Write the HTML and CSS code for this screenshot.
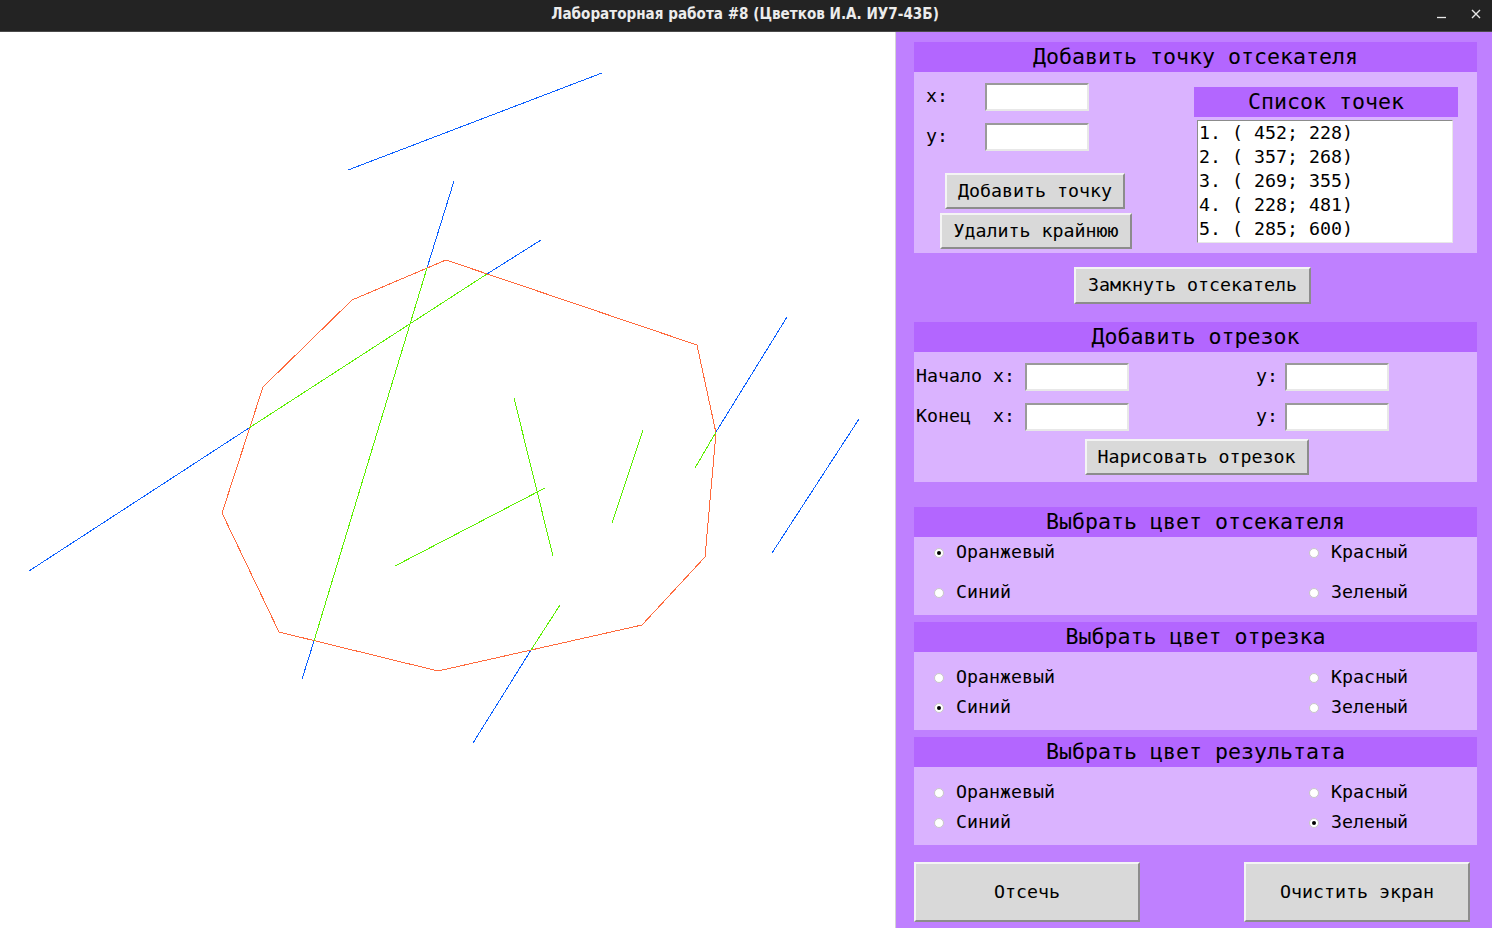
FILE: index.html
```html
<!DOCTYPE html>
<html lang="ru">
<head>
<meta charset="utf-8">
<title>Лабораторная работа #8</title>
<link rel="stylesheet" href="styles.css">
</head>
<body>
<div class="window">
  <header class="titlebar">
    <div class="title">Лабораторная работа #8 (Цветков И.А. ИУ7-43Б)</div>
    <div class="controls">
      <svg class="ctl" width="12" height="12" viewBox="0 0 12 12"><path d="M1 9.5H10" stroke="#e8e8e8" stroke-width="1.3"/></svg>
      <svg class="ctl" width="12" height="12" viewBox="0 0 12 12"><path d="M2 2L10 10M10 2L2 10" stroke="#e8e8e8" stroke-width="1.4"/></svg>
    </div>
  </header>
  <div class="content">
    <div class="canvas">
      <svg class="drawing" width="895" height="896" viewBox="0 0 895 896" shape-rendering="crispEdges" fill="none" stroke-width="1">
        <g stroke="#0a5fff">
          <line x1="348" y1="138" x2="602" y2="41"/>
          <line x1="454" y1="149" x2="427" y2="236"/>
          <line x1="314" y1="609" x2="302" y2="647"/>
          <line x1="541" y1="208" x2="487" y2="242"/>
          <line x1="249" y1="396" x2="29" y2="539"/>
          <line x1="787" y1="285" x2="716" y2="400"/>
          <line x1="859" y1="387" x2="772" y2="521"/>
          <line x1="531" y1="618" x2="473" y2="711"/>
        </g>
        <polygon stroke="#ff6a3d" points="446,228 697,313 716,401 705,525 642,593 438,639 279,600 222,481 263,355 352,268"/>
        <g stroke="#5cf000">
          <line x1="427" y1="236" x2="314" y2="609"/>
          <line x1="487" y1="242" x2="249" y2="396"/>
          <line x1="716" y1="400" x2="695" y2="436"/>
          <line x1="560" y1="573" x2="531" y2="618"/>
          <line x1="514" y1="366" x2="553" y2="524"/>
          <line x1="643" y1="398" x2="612" y2="491"/>
          <line x1="545" y1="456" x2="395" y2="534"/>
        </g>
      </svg>
    </div>
    <aside class="panel">
      <section class="group">
        <h2 class="group-title">Добавить точку отсекателя</h2>
        <div class="group-body clip-body">
          <div class="clip-left">
            <div class="field-row"><span class="lbl lbl-xy">x:</span><input class="entry" type="text"></div>
            <div class="field-row"><span class="lbl lbl-xy">y:</span><input class="entry" type="text"></div>
            <button class="btn btn-add">Добавить точку</button>
            <button class="btn btn-del">Удалить крайнюю</button>
          </div>
          <div class="clip-right">
            <div class="list-title">Список точек</div>
            <div class="listbox">
              <div class="list-item">1. ( 452; 228)</div>
              <div class="list-item">2. ( 357; 268)</div>
              <div class="list-item">3. ( 269; 355)</div>
              <div class="list-item">4. ( 228; 481)</div>
              <div class="list-item">5. ( 285; 600)</div>
            </div>
          </div>
        </div>
      </section>

      <div class="center-row"><button class="btn btn-close">Замкнуть отсекатель</button></div>

      <section class="group group-seg">
        <h2 class="group-title">Добавить отрезок</h2>
        <div class="group-body seg-body">
          <div class="seg-row">
            <span class="lbl lbl-name">Начало</span><span class="lbl lbl-x">x:</span><input class="entry" type="text">
            <span class="lbl lbl-y">y:</span><input class="entry" type="text">
          </div>
          <div class="seg-row">
            <span class="lbl lbl-name">Конец</span><span class="lbl lbl-x">x:</span><input class="entry" type="text">
            <span class="lbl lbl-y">y:</span><input class="entry" type="text">
          </div>
          <div class="center-row"><button class="btn btn-draw">Нарисовать отрезок</button></div>
        </div>
      </section>

      <section class="group group-c1">
        <h2 class="group-title">Выбрать цвет отсекателя</h2>
        <div class="group-body radios radios-wide">
          <label class="radio"><span class="dot on"></span>Оранжевый</label>
          <label class="radio"><span class="dot"></span>Красный</label>
          <label class="radio"><span class="dot"></span>Синий</label>
          <label class="radio"><span class="dot"></span>Зеленый</label>
        </div>
      </section>

      <section class="group group-c2">
        <h2 class="group-title">Выбрать цвет отрезка</h2>
        <div class="group-body radios">
          <label class="radio"><span class="dot"></span>Оранжевый</label>
          <label class="radio"><span class="dot"></span>Красный</label>
          <label class="radio"><span class="dot on"></span>Синий</label>
          <label class="radio"><span class="dot"></span>Зеленый</label>
        </div>
      </section>

      <section class="group group-c3">
        <h2 class="group-title">Выбрать цвет результата</h2>
        <div class="group-body radios">
          <label class="radio"><span class="dot"></span>Оранжевый</label>
          <label class="radio"><span class="dot"></span>Красный</label>
          <label class="radio"><span class="dot"></span>Синий</label>
          <label class="radio"><span class="dot on"></span>Зеленый</label>
        </div>
      </section>

      <div class="bottom-row">
        <button class="btn btn-big">Отсечь</button>
        <button class="btn btn-big">Очистить экран</button>
      </div>
    </aside>
  </div>
</div>
</body>
</html>
```

FILE: styles.css
```css
* { box-sizing: border-box; }

html, body {
  margin: 0;
  padding: 0;
  width: 1492px;
  height: 928px;
  overflow: hidden;
  background: #ffffff;
}

.window {
  width: 1492px;
  height: 928px;
  display: flex;
  flex-direction: column;
  font-family: "DejaVu Sans Mono", monospace;
  font-size: 18.3px;
  color: #000;
}

.titlebar {
  height: 32px;
  flex: none;
  background: #232323;
  border-bottom: 1px solid #4a4a4a;
  display: flex;
  align-items: center;
  justify-content: center;
  position: relative;
}

.title {
  font-family: "DejaVu Sans Condensed", "DejaVu Sans", sans-serif;
  font-stretch: condensed;
  font-weight: bold;
  font-size: 15.1px;
  color: #ececec;
  margin-top: -3px;
  margin-left: -2px;
}

.controls {
  position: absolute;
  right: 10px;
  top: 8px;
  display: flex;
  gap: 22px;
}

.content {
  flex: 1;
  display: flex;
}

.canvas {
  width: 896px;
  flex: none;
  background: #ffffff;
  border-right: 1px solid #d4d4d4;
}

.drawing { display: block; }

.panel {
  flex: 1;
  background: #bf80ff;
  padding: 10px 15px 0 18px;
  display: flex;
  flex-direction: column;
}

.group { margin: 0; }

.group-title {
  margin: 0;
  height: 30px;
  background: #b366ff;
  font-weight: normal;
  font-size: 21.6px;
  line-height: 29px;
  text-align: center;
}

.group-body { background: #dab3ff; }

/* ---- section 1 ---- */
.clip-body {
  height: 181px;
  display: flex;
}

.clip-left {
  width: 280px;
  padding: 11px 0 0 12px;
  display: flex;
  flex-direction: column;
  align-items: flex-start;
}

.field-row {
  height: 28px;
  display: flex;
  align-items: center;
  margin-bottom: 12px;
  line-height: 24px;
}

.lbl { white-space: pre; margin-top: -3px; }
.lbl-xy { width: 59px; }

.entry {
  width: 104px;
  height: 28px;
  margin: 0;
  padding: 0;
  background: #ffffff;
  border: 2px solid;
  border-color: #9a9a9a #e8e8e8 #e8e8e8 #9a9a9a;
  outline: none;
}

.btn {
  font-family: "DejaVu Sans Mono", monospace;
  font-size: 18.3px;
  line-height: 20px;
  color: #000;
  background: #d9d9d9;
  border: 2px solid;
  border-color: #f4f4f4 #8c8c8c #8c8c8c #f4f4f4;
  padding: 0 0 1px 0;
  margin: 0;
  height: 36px;
  white-space: pre;
}

.btn-add { width: 180px; margin: 10px 0 0 19px; }
.btn-del { width: 192px; margin: 4px 0 0 14px; }

.clip-right { padding-top: 15px; }

.list-title {
  width: 264px;
  height: 30px;
  background: #b366ff;
  font-size: 21.6px;
  line-height: 29px;
  text-align: center;
}

.listbox {
  width: 256px;
  height: 123px;
  margin: 3px 0 0 3px;
  background: #ffffff;
  border: 1px solid;
  border-color: #8c8c8c #e8e8e8 #e8e8e8 #8c8c8c;
  padding: 0 1px;
}

.list-item {
  height: 24px;
  line-height: 24px;
  white-space: pre;
}

.center-row {
  display: flex;
  justify-content: center;
}

.btn-close { width: 237px; height: 37px; margin: 14px 0 0 -6px; }

/* ---- section 2 ---- */
.group-seg { margin-top: 18px; }

.seg-body {
  height: 130px;
  padding: 11px 0 0 2px;
}

.seg-row {
  display: flex;
  align-items: center;
  height: 28px;
  margin-bottom: 12px;
  line-height: 24px;
}

.lbl-name { width: 77px; }
.lbl-x { width: 32px; }
.lbl-y { width: 29px; margin-left: 127px; }

.btn-draw { width: 224px; margin: -4px 0 0 0; }

/* ---- colour groups ---- */
.group-c1 { margin-top: 25px; }
.group-c2, .group-c3 { margin-top: 7px; }

.radios {
  height: 78px;
  display: grid;
  grid-template-columns: 375px 1fr;
  grid-auto-rows: 20px;
  row-gap: 10px;
  padding: 15px 0 0 20px;
}

.radios-wide {
  row-gap: 20px;
  padding-top: 5px;
}

.radio {
  display: flex;
  align-items: center;
  line-height: 20px;
}

.dot {
  width: 10px;
  height: 10px;
  border-radius: 50%;
  background: #ffffff;
  border: 1px solid #c8c8c8;
  margin-right: 12px;
  margin-top: 1px;
  position: relative;
  flex: none;
}

.dot.on::after {
  content: "";
  position: absolute;
  left: 2px;
  top: 2px;
  width: 4px;
  height: 4px;
  border-radius: 50%;
  background: #000;
}

.bottom-row {
  display: flex;
  gap: 104px;
  margin-top: 17px;
}

.btn-big { width: 226px; height: 60px; }
```
